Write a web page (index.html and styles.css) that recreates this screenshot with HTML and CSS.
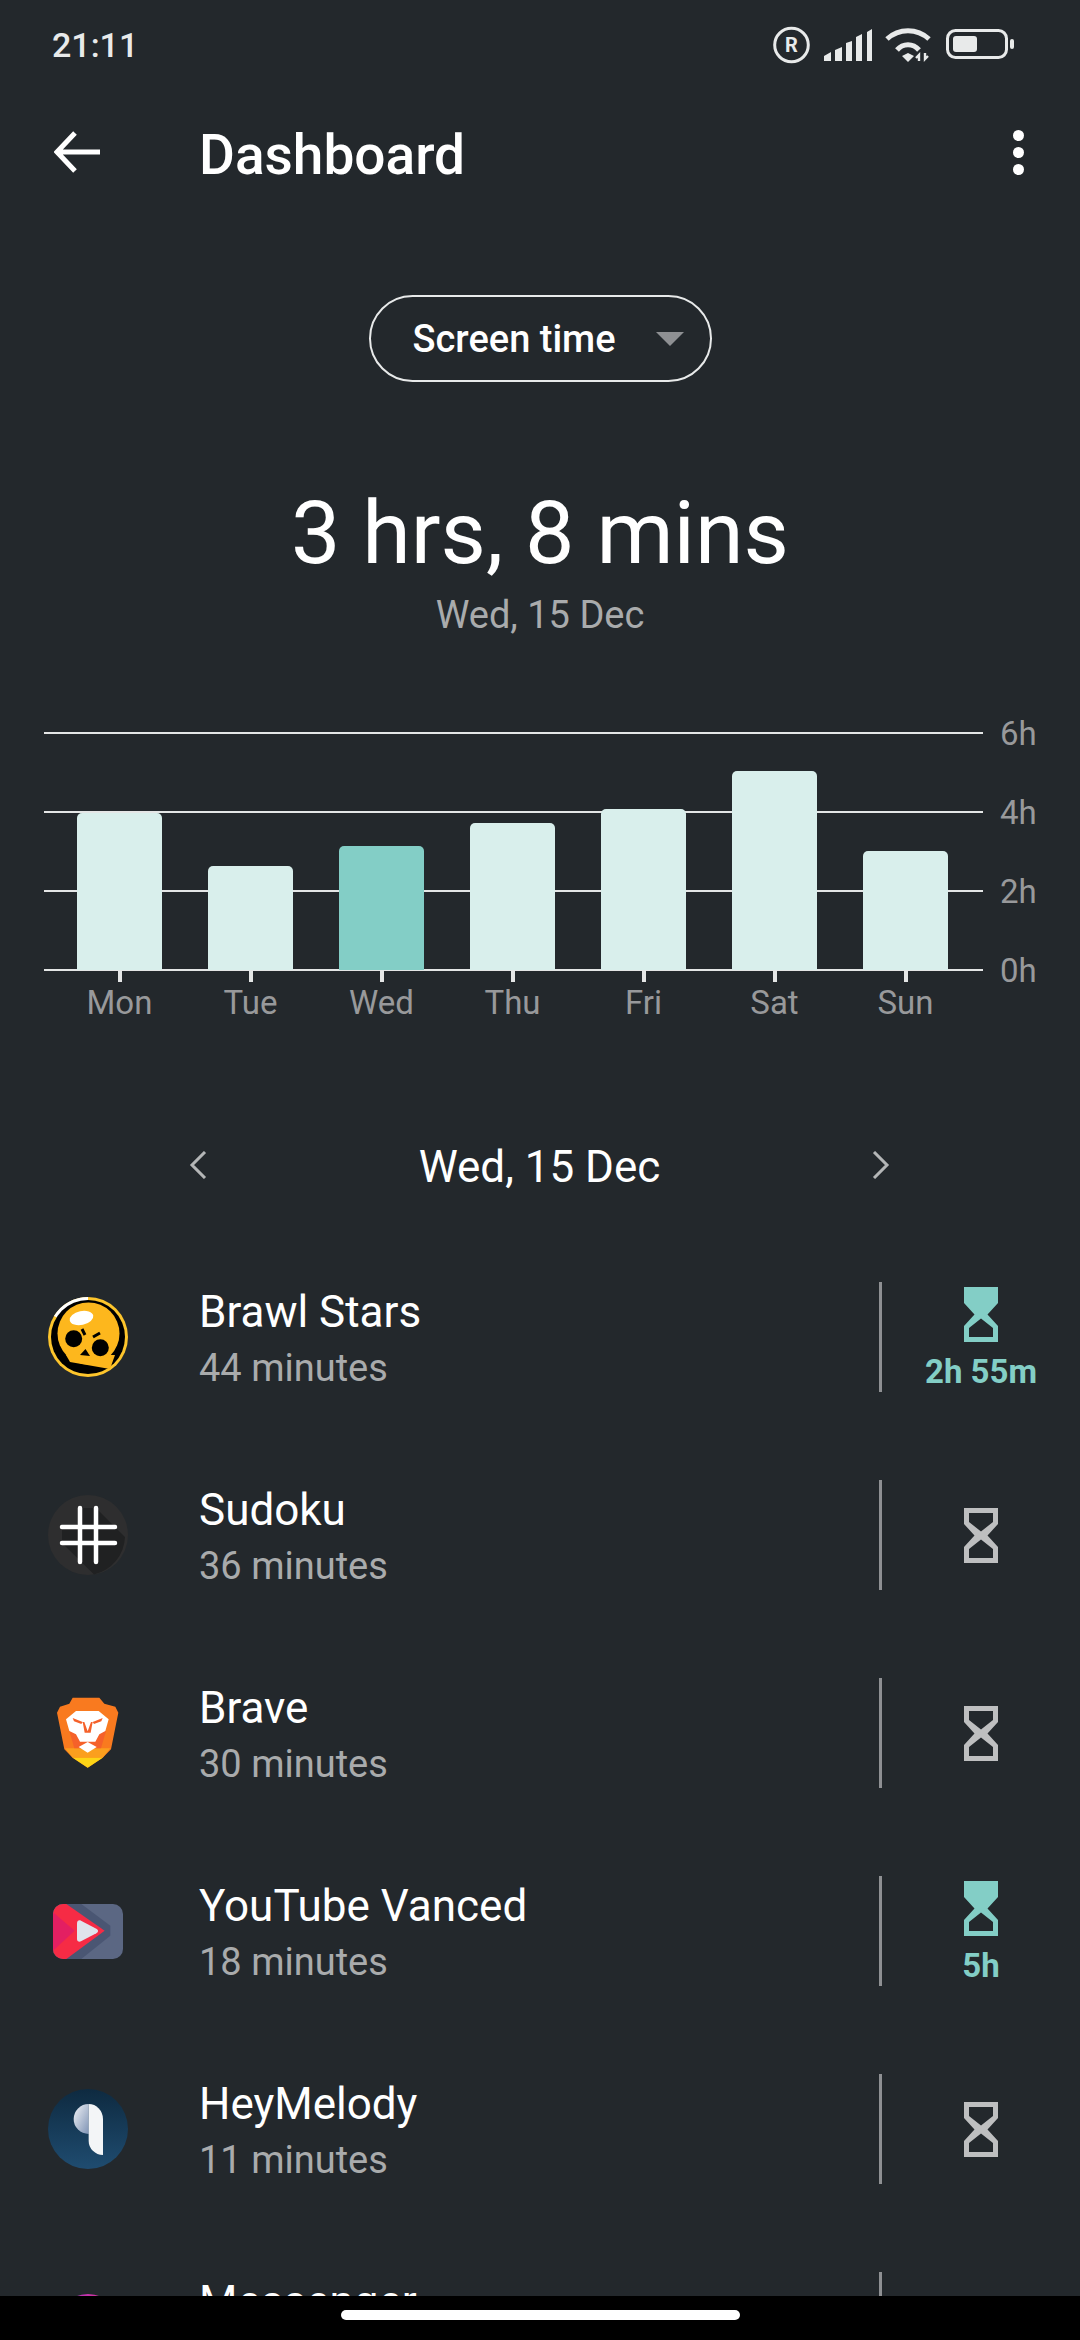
FILE: index.html
```html
<!DOCTYPE html>
<html lang="en">
<head>
    <meta charset="UTF-8">
    <title>Dashboard</title>
    <link rel="stylesheet" href="styles.css">
</head>
<body>
<div class="phone">
    <svg class="defs" width="0" height="0">
        <symbol id="glass-empty" viewBox="0 0 34 55">
            <path fill-rule="evenodd" d="M0 0H34V16L23.500 27.500 34 39V55H0V39L10.500 27.500 0 16ZM5 5V14L17 23.500 29 14V5ZM5 50H29V41L17 31.500 5 41Z"/>
        </symbol>
        <symbol id="glass-full" viewBox="0 0 34 55">
            <path fill-rule="evenodd" d="M0 0H34V16L23.500 27.500 34 39V55H0V39L10.500 27.500 0 16ZM5 50H29V41L17 31.500 5 41Z"/>
        </symbol>
    </svg>

    <div class="status">
        <span class="clock">21:11</span>
        <div class="status-icons">
            <svg width="37" height="38" viewBox="0 0 37 38">
                <circle cx="18.5" cy="19" r="16.8" fill="none" stroke="#e8eaea" stroke-width="3"/>
                <text x="18.5" y="26" text-anchor="middle" class="reg-mark">R</text>
            </svg>
            <svg class="signal" width="48" height="32" viewBox="0 0 48 32" fill="#e8eaea">
                <path d="M0 27 7 23V32H0ZM11 21 18 18V32H11ZM22 14 28 12V32H22ZM32 8 38 5V32H32ZM43 3 48 0V32H43Z"/>
            </svg>
            <svg class="wifi" width="46" height="35" viewBox="0 0 46 35">
                <g fill="none" stroke="#e8eaea" stroke-width="5">
                    <path d="M2 12C14 1 32 1 44 12"/>
                    <path d="M12 23C18 16 28 16 34 23"/>
                </g>
                <path d="M17 29 23 26 29 29 23 35Z" fill="#e8eaea"/>
                <path d="M34 34V28L31 31M40 26V32L43 29" fill="none" stroke="#e8eaea" stroke-width="2.4"/>
            </svg>
            <svg class="battery" width="68" height="30" viewBox="0 0 68 30">
                <rect x="1.5" y="1.5" width="59" height="27" rx="8" fill="none" stroke="#e8eaea" stroke-width="3"/>
                <rect x="7" y="7" width="24" height="16" rx="3" fill="#e8eaea"/>
                <rect x="64" y="10" width="4" height="10" rx="2" fill="#e8eaea"/>
            </svg>
        </div>
    </div>

    <div class="appbar">
        <svg class="back" width="46" height="42" viewBox="0 0 46 42">
            <path d="M21 2 3 21 21 40M3 21H46" fill="none" stroke="#fff" stroke-width="5"/>
        </svg>
        <h1 class="title">Dashboard</h1>
        <div class="more"><i></i><i></i><i></i></div>
    </div>

    <div class="pill-wrap">
        <div class="pill">
            <span>Screen time</span>
            <span class="caret"></span>
        </div>
    </div>

    <div class="total">3 hrs, 8 mins</div>
    <div class="total-date">Wed, 15 Dec</div>

    <div class="chart">
        <div class="chart-main">
            <div class="plot">
                <div class="gridline line-6"></div>
                <div class="gridline line-4"></div>
                <div class="gridline line-2"></div>
                <div class="gridline line-0"></div>
                <div class="bars">
                    <div class="slot"><div class="bar" style="height:157px"></div></div>
                    <div class="slot"><div class="bar" style="height:104px"></div></div>
                    <div class="slot"><div class="bar bar-active" style="height:124px"></div></div>
                    <div class="slot"><div class="bar" style="height:147px"></div></div>
                    <div class="slot"><div class="bar" style="height:161px"></div></div>
                    <div class="slot"><div class="bar" style="height:199px"></div></div>
                    <div class="slot"><div class="bar" style="height:119px"></div></div>
                </div>
            </div>
            <div class="days">
                <div class="day">Mon</div>
                <div class="day">Tue</div>
                <div class="day">Wed</div>
                <div class="day">Thu</div>
                <div class="day">Fri</div>
                <div class="day">Sat</div>
                <div class="day">Sun</div>
            </div>
        </div>
        <div class="yaxis">
            <span>6h</span>
            <span>4h</span>
            <span>2h</span>
            <span>0h</span>
        </div>
    </div>

    <div class="datenav">
        <svg width="18" height="28" viewBox="0 0 18 28"><path d="M16 1 3 14 16 27" fill="none" stroke="#b4b6b7" stroke-width="3"/></svg>
        <span class="datenav-label">Wed, 15 Dec</span>
        <svg width="18" height="28" viewBox="0 0 18 28"><path d="M2 1 15 14 2 27" fill="none" stroke="#b4b6b7" stroke-width="3"/></svg>
    </div>

    <div class="applist">
        <div class="row">
            <div class="app-icon">
                <svg width="80" height="80" viewBox="0 0 80 80">
                    <circle cx="40" cy="40" r="40" fill="#fdc52c"/>
                    <path d="M40 0A40 40 0 0 0 6 19L10 21A36 36 0 0 1 40 4Z" fill="#fff"/>
                    <circle cx="40" cy="40" r="37" fill="#000"/>
                    <path d="M18 58 22 65 62 72 67 58Z" fill="#fdb71d"/>
                    <circle cx="40.500" cy="36.500" r="31" fill="#fdb71d"/>
                    <ellipse cx="33.500" cy="21" rx="12" ry="7" transform="rotate(-12 33.500 21)" fill="#fff"/>
                    <circle cx="25.700" cy="41.700" r="8.500" fill="#000"/>
                    <circle cx="52.300" cy="50.700" r="8.500" fill="#000"/>
                    <path d="M34 32 37 38M45 40 52 36" stroke="#000" stroke-width="3"/>
                    <path d="M37.500 52 32 58 42 59Z" fill="#000"/>
                </svg>
            </div>
            <div class="app-text">
                <div class="app-name">Brawl Stars</div>
                <div class="app-time">44 minutes</div>
            </div>
            <div class="divider"></div>
            <div class="limit limit-set">
                <svg class="glass" width="34" height="55"><use href="#glass-full"/></svg>
                <span class="limit-label">2h 55m</span>
            </div>
        </div>

        <div class="row">
            <div class="app-icon">
                <svg width="80" height="80" viewBox="0 0 80 80">
                    <circle cx="40" cy="40" r="40" fill="#2e2e2f"/>
                    <path d="M48 13 77 42A40 40 0 0 1 46 79.500L14 48V32H32V13Z" fill="#202122"/>
                    <path d="M32 13V67M48 13V67M14 32H67M14 48H67" stroke="#fff" stroke-width="4.5" stroke-linecap="round"/>
                </svg>
            </div>
            <div class="app-text">
                <div class="app-name">Sudoku</div>
                <div class="app-time">36 minutes</div>
            </div>
            <div class="divider"></div>
            <div class="limit">
                <svg class="glass" width="34" height="55"><use href="#glass-empty"/></svg>
            </div>
        </div>

        <div class="row">
            <div class="app-icon">
                <svg width="62" height="72" viewBox="113 85 186 212">
                    <path d="M160 85H240L255 103 288 112 297 130 290 165 275 240 250 265 205 295 160 265 135 240 120 165 113 130 122 112 150 103Z" fill="#f97a1f"/>
                    <path d="M137 237H273L250 265H160Z" fill="#fb9f1e"/>
                    <path d="M160 265H250L205 295Z" fill="#fdd416"/>
                    <path d="M150 185 165 237H245L260 185Z" fill="#f5612a"/>
                    <path d="M170 125H238L268 150 258 185 240 195 228 217H182L170 195 150 185 140 150Z" fill="#fff"/>
                    <path d="M178 233 205 218 232 233 205 250Z" fill="#fff"/>
                    <path d="M160 146 190 158 186 164 164 156ZM250 146 220 158 224 164 246 156ZM190 158H195L205 186 215 158H220L214 190H196Z" fill="#f5612a"/>
                </svg>
            </div>
            <div class="app-text">
                <div class="app-name">Brave</div>
                <div class="app-time">30 minutes</div>
            </div>
            <div class="divider"></div>
            <div class="limit">
                <svg class="glass" width="34" height="55"><use href="#glass-empty"/></svg>
            </div>
        </div>

        <div class="row">
            <div class="app-icon">
                <svg width="70" height="55" viewBox="100 100 210 165">
                    <defs>
                        <clipPath id="tile"><rect x="100" y="100" width="210" height="165" rx="30"/></clipPath>
                    </defs>
                    <g clip-path="url(#tile)">
                        <rect x="100" y="100" width="210" height="165" fill="#5b6783"/>
                        <path d="M100 100H185L272 165V195L185 265H100Z" fill="#4a5673"/>
                        <path d="M100 100H140L255 180 140 265H100Z" fill="#f62b45"/>
                        <path d="M100 125 165 180 100 240Z" fill="#e31f62"/>
                    </g>
                    <path d="M172 158C172 150 178 147 184 150L230 174C237 178 237 184 230 188L184 212C178 215 172 212 172 205Z" fill="#e0e3eb"/>
                </svg>
            </div>
            <div class="app-text">
                <div class="app-name">YouTube Vanced</div>
                <div class="app-time">18 minutes</div>
            </div>
            <div class="divider"></div>
            <div class="limit limit-set">
                <svg class="glass" width="34" height="55"><use href="#glass-full"/></svg>
                <span class="limit-label">5h</span>
            </div>
        </div>

        <div class="row">
            <div class="app-icon">
                <svg width="80" height="80" viewBox="83 55 240 240">
                    <defs>
                        <linearGradient id="melody-bg" x1="0" y1="0" x2="0" y2="1">
                            <stop offset="0" stop-color="#0e2a40"/>
                            <stop offset="1" stop-color="#1f4c70"/>
                        </linearGradient>
                        <linearGradient id="melody-ball" x1="0" y1="0" x2="1" y2="1">
                            <stop offset="0" stop-color="#f2f4f7"/>
                            <stop offset="1" stop-color="#7e93b5"/>
                        </linearGradient>
                    </defs>
                    <circle cx="203" cy="175" r="120" fill="url(#melody-bg)"/>
                    <path d="M205 100A45 45 0 0 0 205 190Z" fill="url(#melody-ball)"/>
                    <path d="M205 100A43 45 0 0 1 248 145V253A43 43 0 0 1 205 210Z" fill="#f3f5f7"/>
                </svg>
            </div>
            <div class="app-text">
                <div class="app-name">HeyMelody</div>
                <div class="app-time">11 minutes</div>
            </div>
            <div class="divider"></div>
            <div class="limit">
                <svg class="glass" width="34" height="55"><use href="#glass-empty"/></svg>
            </div>
        </div>

        <div class="row">
            <div class="app-icon">
                <div class="messenger"></div>
            </div>
            <div class="app-text">
                <div class="app-name">Messenger</div>
                <div class="app-time">9 minutes</div>
            </div>
            <div class="divider"></div>
            <div class="limit">
                <svg class="glass" width="34" height="55"><use href="#glass-empty"/></svg>
            </div>
        </div>
    </div>

    <div class="navbar"><div class="home-pill"></div></div>
</div>
</body>
</html>
```

FILE: styles.css
```css
* {
    box-sizing: border-box;
}
body {
    margin: 0;
    background-color: #23282c;
    font-family: Roboto, "Noto Sans", sans-serif;
    color: #fff;
}
.phone {
    position: relative;
    width: 1080px;
    height: 2340px;
    overflow: hidden;
    background-color: #23282c;
}
.defs {
    position: absolute;
}

/* status bar */
.status {
    display: flex;
    justify-content: space-between;
    align-items: center;
    height: 90px;
    padding: 0 66px 0 52px;
}
.clock {
    font-size: 34px;
    font-weight: 500;
    color: #e8eaea;
}
.status-icons {
    display: flex;
    align-items: flex-start;
    height: 38px;
}
.reg-mark {
    font-family: Roboto, sans-serif;
    font-size: 20px;
    font-weight: 700;
    fill: #e8eaea;
}
.signal {
    margin: 3px 0 0 14px;
}
.wifi {
    margin: 1px 0 0 13px;
}
.battery {
    margin: 3px 0 0 15px;
}

/* app bar */
.appbar {
    display: flex;
    align-items: center;
    height: 124px;
    padding: 0 56px 0 54px;
}
.title {
    flex: 1;
    margin: 0 0 0 99px;
    padding-top: 6px;
    font-size: 55px;
    font-weight: 500;
}
.more {
    display: flex;
    flex-direction: column;
    gap: 6px;
}
.more i {
    display: block;
    width: 11px;
    height: 11px;
    border-radius: 50%;
    background-color: #fff;
}

/* metric selector */
.pill-wrap {
    display: flex;
    justify-content: center;
    margin-top: 81px;
}
.pill {
    display: flex;
    align-items: center;
    gap: 40px;
    width: 343px;
    height: 87px;
    padding-left: 42px;
    border: 2.5px solid #e8eaea;
    border-radius: 44px;
    font-size: 38px;
    font-weight: 500;
}
.caret {
    width: 0;
    height: 0;
    border-left: 14px solid transparent;
    border-right: 14px solid transparent;
    border-top: 14px solid #8e9093;
}

/* total */
.total {
    margin-top: 96px;
    font-size: 88px;
    line-height: 110px;
    text-align: center;
}
.total-date {
    font-size: 38px;
    line-height: 54px;
    text-align: center;
    color: #a9abac;
}

/* chart */
.chart {
    display: flex;
    margin-top: 90px;
    padding-left: 44px;
}
.chart-main {
    width: 939px;
}
.plot {
    position: relative;
    height: 239px;
}
.gridline {
    position: absolute;
    left: 0;
    right: 0;
    height: 2px;
    background-color: #e4e6e6;
}
.line-6 { top: 0; }
.line-4 { top: 79px; }
.line-2 { top: 158px; }
.line-0 { top: 237px; }
.bars {
    position: relative;
    display: flex;
    align-items: flex-end;
    height: 238px;
    padding-left: 10px;
}
.slot {
    display: flex;
    justify-content: center;
    width: 131px;
}
.bar {
    width: 85px;
    border-radius: 5px 5px 0 0;
    background-color: #d9efec;
}
.bar-active {
    background-color: #83cec6;
}
.days {
    display: flex;
    padding-left: 10px;
}
.day {
    position: relative;
    width: 131px;
    padding-top: 11px;
    font-size: 33px;
    line-height: 42px;
    text-align: center;
    color: #98999b;
}
.day::before {
    content: "";
    position: absolute;
    top: 0;
    left: 64px;
    width: 4px;
    height: 11px;
    background-color: #e4e6e6;
}
.yaxis {
    display: flex;
    flex-direction: column;
    margin: -38px 0 0 17px;
    font-size: 33px;
    color: #98999b;
}
.yaxis span {
    display: flex;
    align-items: center;
    height: 79px;
}

/* date navigation */
.datenav {
    display: flex;
    justify-content: space-between;
    align-items: center;
    height: 60px;
    margin-top: 111px;
    padding: 0 190px 0 189px;
    font-size: 44px;
}
.datenav-label {
    margin-top: 3px;
}

/* app list */
.applist {
    margin-top: 43px;
}
.row {
    display: flex;
    align-items: center;
    height: 198px;
    padding-left: 48px;
}
.app-icon {
    display: flex;
    justify-content: center;
    align-items: center;
    width: 80px;
    height: 80px;
}
.messenger {
    width: 66px;
    height: 66px;
    border-radius: 50%;
    background: linear-gradient(to right, #9a36d8, #f0307c);
}
.app-text {
    flex: 1;
    margin-left: 71px;
    padding-top: 6px;
}
.app-name {
    font-size: 44px;
    line-height: 56px;
}
.app-time {
    font-size: 38px;
    line-height: 56px;
    color: #a9abac;
}
.divider {
    width: 3px;
    height: 110px;
    background-color: #8e9093;
}
.limit {
    display: flex;
    flex-direction: column;
    align-items: center;
    width: 198px;
    fill: #bebfc0;
}
.limit-set {
    fill: #83cec6;
    color: #83cec6;
}
.limit-label {
    margin-top: 15px;
    font-size: 33px;
    font-weight: 700;
    line-height: 30px;
}

/* gesture bar */
.navbar {
    position: absolute;
    left: 0;
    right: 0;
    bottom: 0;
    display: flex;
    justify-content: center;
    height: 44px;
    padding-top: 14px;
    background-color: #000;
}
.home-pill {
    width: 399px;
    height: 10px;
    border-radius: 5px;
    background-color: #fff;
}
```
